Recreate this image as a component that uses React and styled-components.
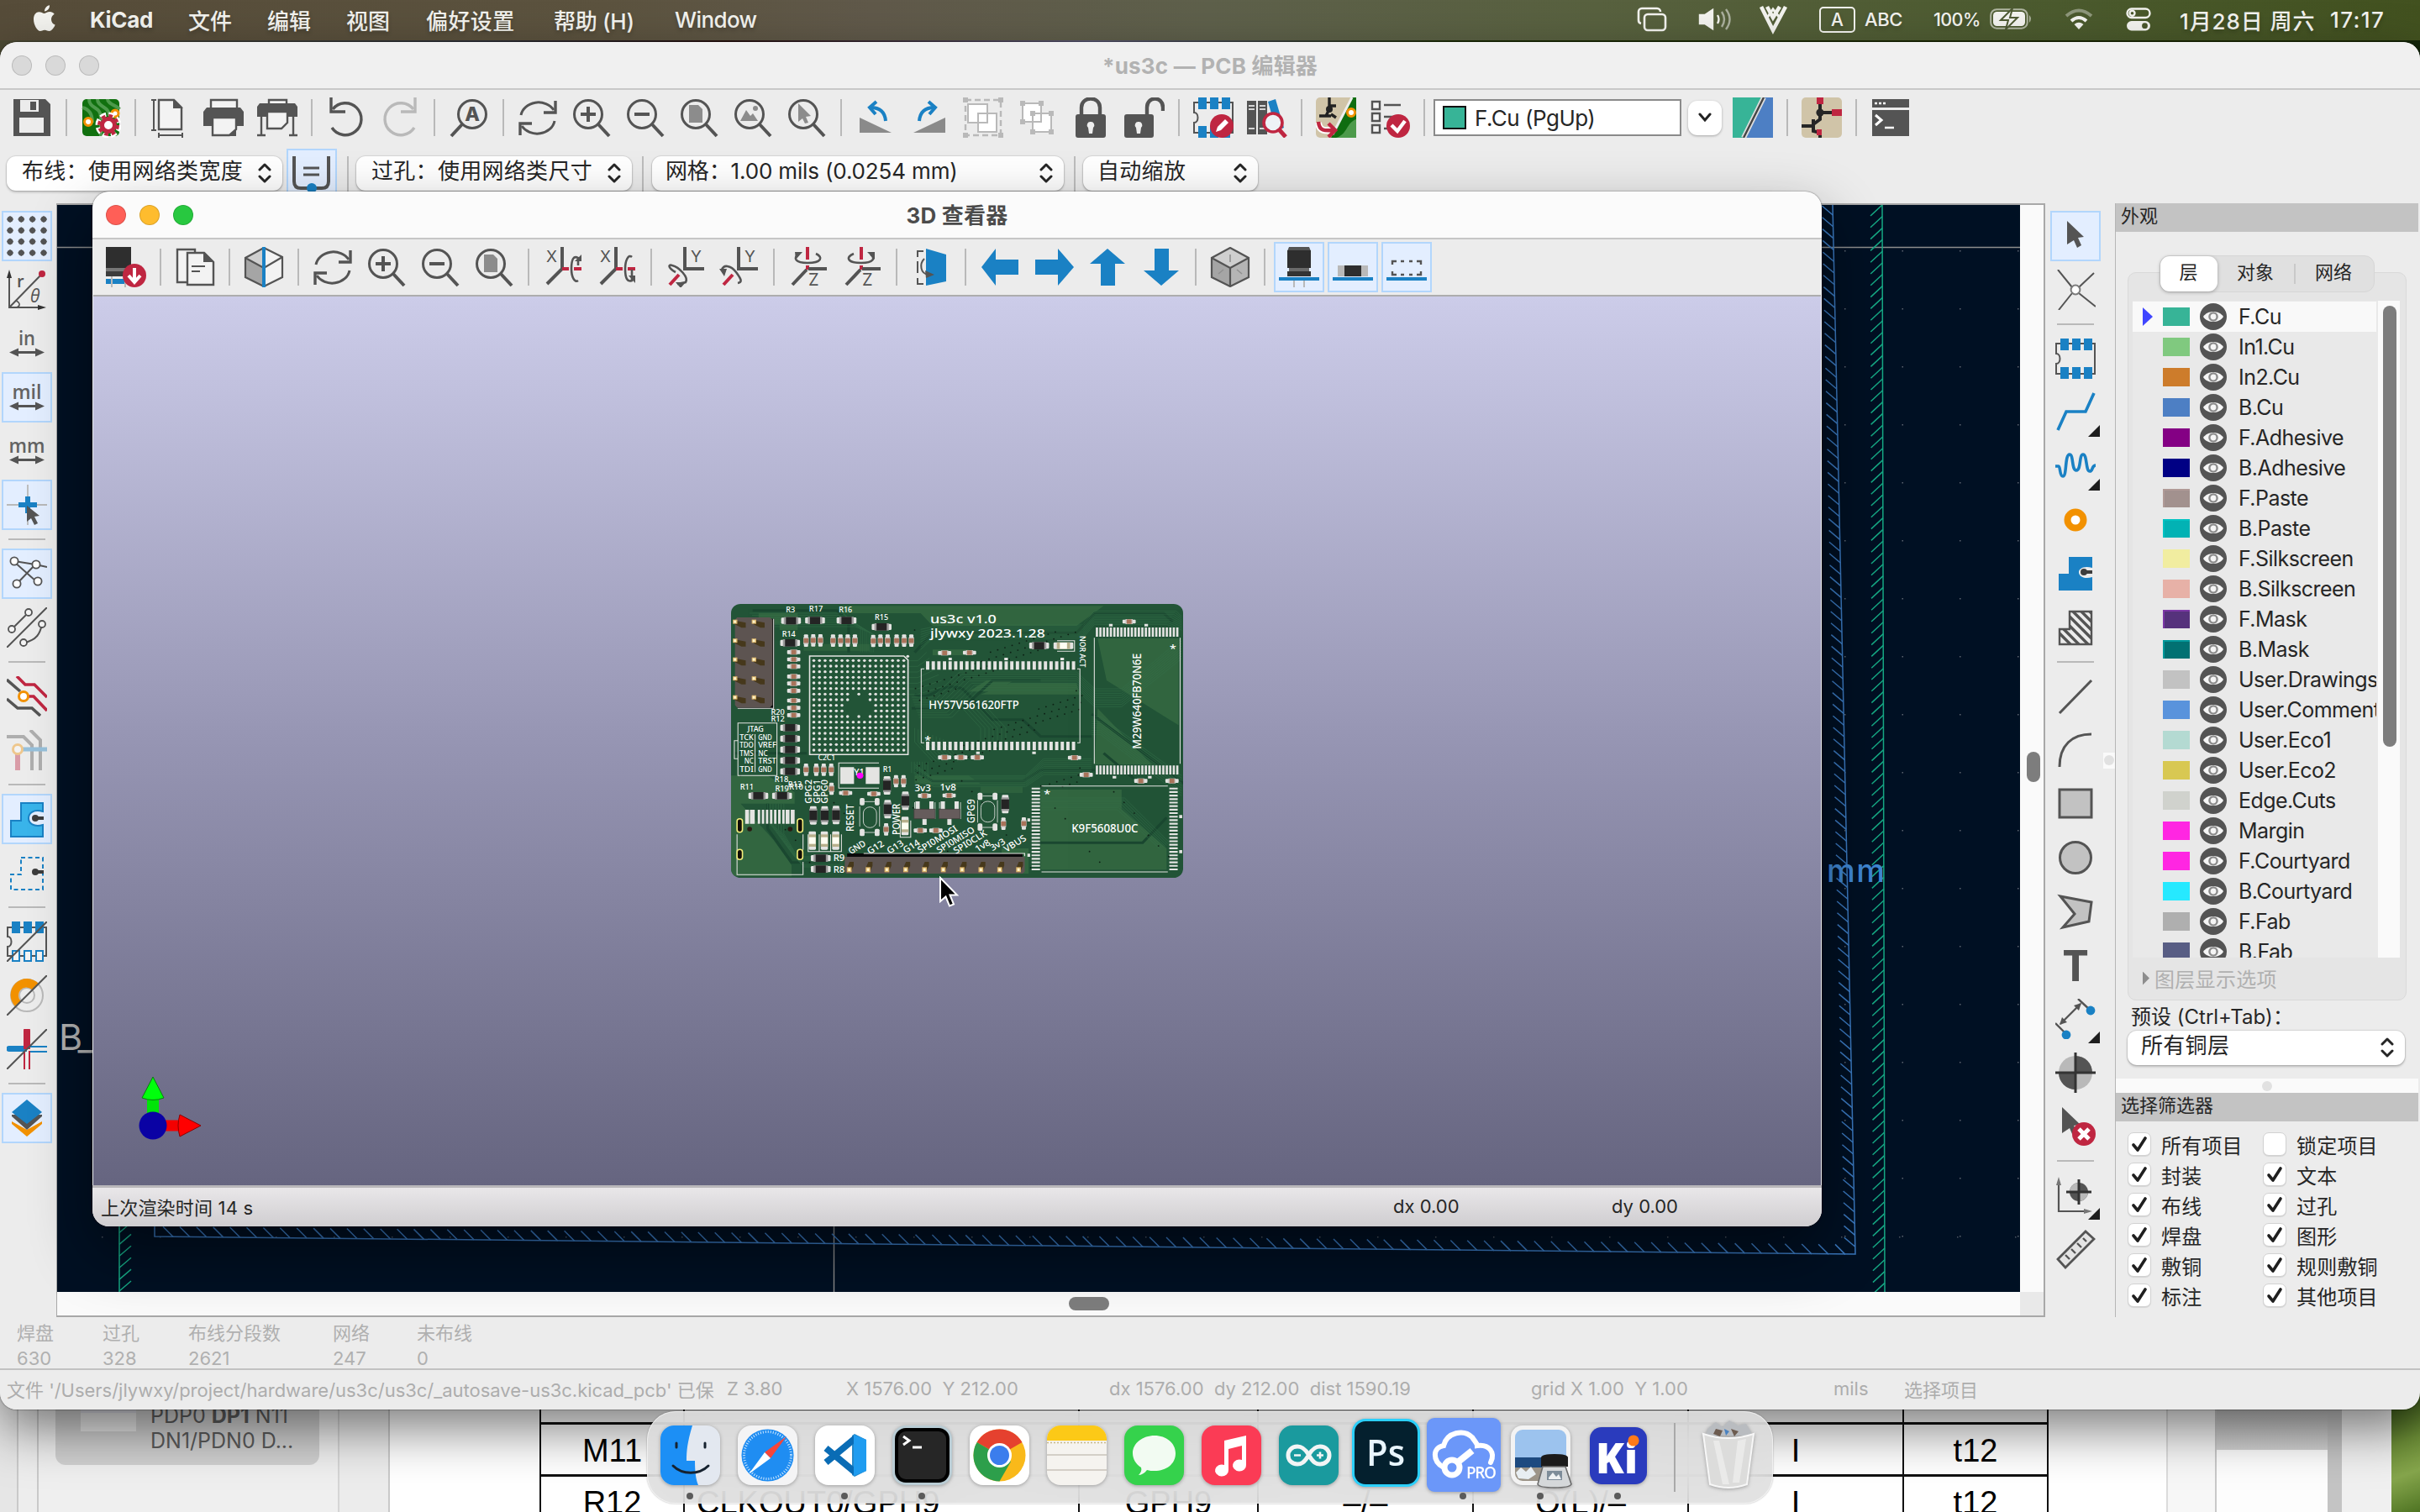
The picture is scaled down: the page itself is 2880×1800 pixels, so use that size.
import React from "react";
import styled, { createGlobalStyle, css } from "styled-components";

const UI = '"Inter", "Noto Sans CJK SC", sans-serif';
const D = "#545454";
const B = "#1a81c4";
const R = "#bf2641";
const G = "#b9b9b9";
const O = "#f29100";

const Global = createGlobalStyle`
  * { box-sizing: border-box; }
  html, body { margin: 0; padding: 0; width: 2880px; height: 1800px; overflow: hidden; }
  body { font-family: ${UI}; font-size: 26px; color: #262626; background: #3b4a1c; }
  svg { display: block; flex: none; }
`;

/* ---------- desktop ---------- */
const Desktop = styled.div`
  position: relative;
  width: 2880px;
  height: 1800px;
  overflow: hidden;
  background: linear-gradient(90deg, #4b4a33 0, #30333b 20%, #2a1210 30%, #5d5b78 45%, #1d2e06 60%, #1c2b05 98%, #12240a 100%);
`;
const Wallpaper = styled.div`
  position: absolute;
  right: 0;
  bottom: 0;
  width: 60px;
  height: 180px;
  background: linear-gradient(160deg, #1c3408 15%, #6d8f37 55%, #86a64c 75%, #4f7423 100%);
`;

/* ---------- menu bar ---------- */
const MenuBar = styled.header`
  display: flex;
  align-items: center;
  height: 48px;
  padding: 0 0 2px 40px;
  color: #f3f3ef;
  background: linear-gradient(90deg, #564c39 0, #5c533f 25%, #60594a 36%, #5e604b 50%, #58613f 66%, #4b5a2e 85%, #42511f 100%);
  text-shadow: 0 3px 5px rgba(0, 0, 0, 0.22);
`;
const MenuItem = styled.span`
  width: ${(p) => p.$w}px;
  font-weight: ${(p) => (p.$bold ? 700 : 500)};
  font-size: 26px;
  letter-spacing: ${(p) => p.$ls || -0.3}px;
  white-space: nowrap;
`;
const Spacer = styled.div`
  flex: 1;
`;
const StatusItem = styled.div`
  width: ${(p) => p.$w}px;
  font-size: ${(p) => p.$size || 22}px;
  font-weight: 500;
  letter-spacing: ${(p) => p.$ls || 0}px;
  white-space: nowrap;
  svg { overflow: visible; }
`;
const Ime = styled.div`
  width: 43px;
  height: 31px;
  border: 2px solid #f3f3ef;
  border-radius: 5px;
  font-size: 21px;
  line-height: 27px;
  text-align: center;
`;

/* ---------- windows ---------- */
const WindowFrame = styled.section`
  position: absolute;
  left: ${(p) => p.$x}px;
  top: ${(p) => p.$y}px;
  width: ${(p) => p.$w}px;
  height: ${(p) => p.$h}px;
  display: flex;
  flex-direction: column;
  overflow: hidden;
  border-radius: 20px;
  background: #ececec;
  box-shadow: ${(p) => p.$shadow};
`;
const TitleBar = styled.div`
  display: flex;
  align-items: center;
  justify-content: center;
  position: relative;
  height: 57px;
  flex: none;
  padding-bottom: 3px;
  border-radius: 20px 20px 0 0;
  background: ${(p) => (p.$active ? "#fbfbfb" : "#f0f0f0")};
  color: ${(p) => (p.$active ? "#4b4b4b" : "#b2b2b2")};
  border-bottom: 2px solid ${(p) => (p.$active ? "#c6c6c6" : "#c8c8c8")};
  font-size: 26px;
  font-weight: 700;
  letter-spacing: 0.2px;
`;
const Lights = styled.div`
  position: absolute;
  left: ${(p) => p.$x}px;
  top: 16px;
  display: flex;
  gap: 16px;
`;
const Light = styled.i`
  width: 24px;
  height: 24px;
  border-radius: 50%;
  background: ${(p) => p.$c};
  border: 1px solid rgba(0, 0, 0, 0.14);
`;
const Bar = styled.div`
  display: flex;
  align-items: center;
  height: 66px;
  flex: none;
  padding-left: ${(p) => p.$pad}px;
`;
const Cell = styled.div`
  width: 64px;
  height: 64px;
  flex: none;
  display: flex;
  align-items: center;
  justify-content: center;
  position: relative;
`;
const Btn = styled.div`
  width: 60px;
  height: 60px;
  display: flex;
  align-items: center;
  justify-content: center;
  border: 2px solid transparent;
  ${(p) => p.$on && css`background: #e3eeff; border-color: #b2d6fc;`}
  opacity: ${(p) => (p.$dim ? 0.4 : 1)};
`;
const Flyout = styled.i`
  position: absolute;
  right: 2px;
  bottom: 3px;
  width: 14px;
  height: 14px;
  background: #1d1d1d;
  clip-path: polygon(100% 0, 100% 100%, 0 100%);
`;
const Sep = styled.div`
  flex: none;
  background: #b9b9b9;
  ${(p) => (p.$h ? css`width: 44px; height: 2px; margin: 8px auto;` : css`width: 2px; height: 44px; margin: 0 8px;`)}
`;
const OptionsBar = styled.div`
  display: flex;
  align-items: flex-start;
  height: 69px;
  flex: none;
  padding: 13px 0 0 8px;
`;
const Combo = styled.div`
  display: flex;
  align-items: center;
  justify-content: space-between;
  width: ${(p) => p.$w}px;
  height: 41px;
  padding: 0 ${(p) => p.$pr || 13}px 2px ${(p) => p.$pl || 18}px;
  border-radius: 11px;
  background: #fff;
  box-shadow: 0 0 1px 1px rgba(0, 0, 0, 0.1), 0 2px 3px rgba(0, 0, 0, 0.2);
  font-size: 26px;
  letter-spacing: ${(p) => p.$ls || 0.3}px;
  line-height: 36px;
  white-space: nowrap;
`;
const ComboText = styled.span`
  padding-bottom: 3px;
`;
const Divider = styled.div`
  width: 2px;
  height: 46px;
  flex: none;
  background: #bdbdbd;
  margin: 0 ${(p) => p.$r}px 0 ${(p) => p.$l}px;
`;
const TrackBtn = styled.div`
  width: 60px;
  height: 60px;
  margin: -9px 0 0 5px;
  border: 2px solid #b2d6fc;
  background: #e3eeff;
  display: flex;
  justify-content: center;
  padding-top: 5px;
`;
const LayerBox = styled.div`
  display: flex;
  align-items: center;
  width: 295px;
  height: 44px;
  margin-left: 2px;
  padding-left: 9px;
  gap: 10px;
  border: 2px solid #8a8a8a;
  background: #fff;
  font-size: 26px;
  letter-spacing: -0.5px;
`;
const LayerChip = styled.i`
  width: 28px;
  height: 28px;
  background: #37b497;
  border: 2px solid #111;
`;
const DropBtn = styled.div`
  width: 40px;
  height: 41px;
  margin: 0 5px 0 8px;
  border-radius: 11px;
  background: #fff;
  box-shadow: 0 1px 3px rgba(0, 0, 0, 0.3);
  display: flex;
  align-items: center;
  justify-content: center;
`;

const Body = styled.div`
  display: grid;
  grid-template-columns: 67px 2367px 83px 1fr;
  height: 1326px;
  flex: none;
`;
const SideBar = styled.div`
  padding: 7px 0 0 ${(p) => p.$pad}px;
  width: ${(p) => p.$pad + 63}px;
  align-self: flex-start;
`;
const SideCell = styled(Cell)`
  width: 63px;
`;
const RightBar = styled.div`
  display: flex;
  align-items: center;
  justify-content: space-between;
`;
const Work = styled.div`
  display: grid;
  grid-template-columns: 1fr 28px;
  grid-template-rows: 1294px 1fr;
  border: 1px solid #a8a8a8;
  border-width: 2px 2px 2px 1px;
`;
const ScrollTrack = styled.div`
  background: #fafafa;
  display: flex;
  justify-content: center;
  align-items: flex-start;
`;
const HTrack = styled(ScrollTrack)`
  justify-content: flex-start;
  align-items: center;
`;
const Corner = styled.div`
  background: #e9e9e9;
`;
const Thumb = styled.i`
  width: ${(p) => p.$w}px;
  height: ${(p) => p.$h}px;
  margin: ${(p) => p.$m};
  border-radius: 9px;
  background: #7d7d7d;
`;
const PanelGrip = styled.div`
  width: 14px;
  height: 19px;
  background: #fafafa;
  display: flex;
  align-items: center;
  justify-content: center;
`;
const Dot = styled.i`
  width: 12px;
  height: 12px;
  border-radius: 50%;
  background: #e1e1e1;
`;

/* ---------- appearance panel ---------- */
const Panel = styled.aside`
  display: flex;
  flex-direction: column;
  margin-right: 2px;
  border-left: 1px solid #b5b5b5;
`;
const PanelTitle = styled.div`
  height: 34px;
  flex: none;
  padding-left: 6px;
  background: #c3c3c3;
  font-size: 22px;
  line-height: 31px;
`;
const TabsRow = styled.div`
  display: flex;
  justify-content: center;
  height: 44px;
  margin: 28px 0 0 -1px;
  position: relative;
`;
const Tabs = styled.div`
  display: flex;
  align-items: center;
  width: 256px;
  border-radius: 12px;
  background: #e0e0e0;
  border: 1px solid #d6d6d6;
  font-size: 22px;
`;
const Tab = styled.div`
  width: ${(p) => p.$w}px;
  height: 42px;
  line-height: 38px;
  text-align: center;
  border-radius: 11px;
  ${(p) => p.$on && css`background: #fff; box-shadow: 0 1px 4px rgba(0, 0, 0, 0.3);`}
`;
const TabLine = styled.i`
  width: 2px;
  height: 24px;
  background: #c9c9c9;
`;
const GroupBox = styled.div`
  margin: -24px 0 0 14px;
  width: 332px;
  height: 867px;
  padding: 33px 7px 0 5px;
  border: 1px solid #d9d9d9;
  border-radius: 10px;
  background: #e5e5e5;
`;
const ListView = styled.div`
  display: flex;
  height: 782px;
  overflow: hidden;
  background: #e9e9e9;
`;
const Rows = styled.div`
  width: 290px;
  overflow: hidden;
  margin-right: 2px;
`;
const LayerRow = styled.div`
  display: flex;
  align-items: center;
  height: 36px;
  padding-left: 12px;
  background: ${(p) => (p.$on ? "#f9f9f9" : "transparent")};
  font-size: 25px;
  letter-spacing: -0.55px;
  white-space: nowrap;
  &:first-child { margin-top: 1px; }
`;
const Mark = styled.i`
  width: 12px;
  height: 22px;
  margin-right: 12px;
  flex: none;
  background: ${(p) => (p.$on ? "#4046ff" : "transparent")};
  clip-path: polygon(0 0, 100% 50%, 0 100%);
`;
const Chip = styled.i`
  width: 32px;
  height: 22px;
  flex: none;
  margin: -1px 12px 0 0;
  background: ${(p) => p.$c};
  ${(p) => p.$edge && css`box-shadow: inset 2px 2px 0 ${p.$edge};`}
`;
const LayerName = styled.span`
  margin-left: 14px;
`;
const ListScroll = styled.div`
  width: 26px;
  background: #fafafa;
  padding: 6px 0 0 6px;
`;
const ListThumb = styled.div`
  width: 16px;
  height: 525px;
  border-radius: 8px;
  background: #7d7d7d;
`;
const Collapse = styled.div`
  display: flex;
  align-items: center;
  height: 49px;
  padding-left: 12px;
  gap: 6px;
  font-size: 24px;
  letter-spacing: 0.3px;
  color: #b0b0b0;
`;
const Tri = styled.i`
  width: 8px;
  height: 16px;
  background: #8d8d8d;
  clip-path: polygon(0 0, 100% 50%, 0 100%);
`;
const PresetLabel = styled.div`
  margin: 3px 0 0 18px;
  height: 32px;
  line-height: 33px;
  font-size: 24px;
`;
const PresetWrap = styled.div`
  padding: 1px 0 0 14px;
  height: 58px;
`;
const Splitter = styled.div`
  height: 17px;
  background: #fafafa;
  display: flex;
  align-items: center;
  justify-content: center;
`;
const Filters = styled.div`
  display: grid;
  grid-template-columns: 161px 1fr;
  grid-auto-rows: 36px;
  padding: 9px 0 0 14px;
`;
const Filter = styled.label`
  display: flex;
  align-items: center;
  gap: 12px;
  font-size: 24px;
  letter-spacing: 0.2px;
  white-space: nowrap;
`;
const Check = styled.i`
  width: 28px;
  height: 28px;
  border-radius: 7px;
  background: #fff;
  border: 1px solid #d2d2d2;
  box-shadow: 0 1px 1px rgba(0, 0, 0, 0.1);
  display: flex;
  align-items: center;
  justify-content: center;
`;

/* ---------- bottom of the editor ---------- */
const InfoBar = styled.div`
  display: flex;
  height: 63px;
  flex: none;
  padding: 4px 0 0 20px;
  border-bottom: 2px solid #c2c2c2;
  color: #b0b0b0;
  font-size: 22px;
`;
const InfoItem = styled.div`
  width: ${(p) => p.$w}px;
  line-height: 30px;
  white-space: nowrap;
`;
const StatusBar = styled.div`
  display: flex;
  align-items: center;
  flex: 1;
  padding: 0 0 3px 8px;
  color: #adadad;
  font-size: 22px;
  border-radius: 0 0 20px 20px;
`;
const StatusCell = styled.span`
  width: ${(p) => p.$w}px;
  letter-spacing: ${(p) => p.$ls || 0}px;
  white-space: pre;
`;

/* ---------- 3D viewer ---------- */
const View3D = styled.div`
  position: relative;
  height: 1060px;
  flex: none;
  margin: 0 1px;
  border-top: 2px solid #adadad;
  background: linear-gradient(180deg, #cccce9 0, #9695b3 50%, #666580 100%);
`;
const ViewStatus = styled.div`
  display: flex;
  align-items: center;
  flex: 1;
  padding: 0 0 3px 10px;
  border-top: 3px solid #b9b7ba;
  background: linear-gradient(180deg, #e9e7e9, #cfcdd0);
  font-size: 22px;
`;
const Board = styled.svg`
  position: absolute;
  left: 759px;
  top: 366px;
`;
const Axes = styled.svg`
  position: absolute;
  left: 49px;
  top: 922px;
`;
const Pointer = styled.svg`
  position: absolute;
  left: 1004px;
  top: 690px;
`;

/* ---------- document window behind ---------- */
const DocWindow = styled.section`
  position: absolute;
  left: 0;
  top: 1634px;
  width: 2846px;
  height: 166px;
  overflow: hidden;
  display: flex;
  background: #f0f0f0;
`;
const Strip = styled.div`
  width: ${(p) => p.$w}px;
  flex: none;
  background: ${(p) => p.$c};
  border-right: ${(p) => (p.$line ? "2px solid #c9c9c9" : "0")};
`;
const Thumbs = styled.div`
  width: 358px;
  flex: none;
  padding: 0 22px 0 20px;
  background: #efefef;
  border-right: 2px solid #d5d5d5;
`;
const ThumbCard = styled.div`
  display: flex;
  gap: 17px;
  height: 110px;
  padding: 26px 0 0 30px;
  border-radius: 0 0 12px 12px;
  background: #d0d0d0;
  color: #5c5c5c;
  font-size: 25px;
  line-height: 30px;
  letter-spacing: 0;
`;
const ThumbPic = styled.div`
  width: 66px;
  height: 44px;
  background: #e8e8e8;
  border-top: 22px solid #d9d9e0;
`;
const ThumbText = styled.div`
  padding-top: 10px;
  white-space: nowrap;
`;
const Page = styled.div`
  width: 2116px;
  flex: none;
  padding-left: 178px;
  background: #fff;
  border-right: 2px solid #dcdcdc;
`;
const Table = styled.div`
  display: grid;
  grid-template-columns: 171px 470px 213px 256px 256px 256px 172px;
  grid-auto-rows: 62px;
  width: 1796px;
  border-left: 2px solid #111;
`;
const Td = styled.div`
  display: flex;
  align-items: center;
  justify-content: ${(p) => (p.$left ? "flex-start" : "center")};
  padding: 4px 0 0 ${(p) => (p.$left ? 14 : 0)}px;
  border-right: 2px solid #111;
  border-bottom: 3px solid #111;
  color: #000;
  font: 38px "Liberation Sans", Arial, sans-serif;
`;
const GreyBlock = styled.div`
  width: 132px;
  flex: none;
  background: linear-gradient(180deg, #b5b5b5 0, #d3d3d3 92px, #fdfdfd 92px);
`;

/* ---------- dock ---------- */
const Dock = styled.nav`
  position: absolute;
  left: 770px;
  top: 1680px;
  width: 1340px;
  height: 110px;
  border-radius: 34px;
  background: rgba(222, 222, 222, 0.86);
  backdrop-filter: blur(30px);
  box-shadow: inset 0 0 0 1px rgba(255, 255, 255, 0.5), 0 0 2px rgba(0, 0, 0, 0.35);
  display: flex;
  padding: 7px 0 0 5px;
`;
const DockApp = styled.div`
  width: 92px;
  height: 100px;
  display: flex;
  flex-direction: column;
  align-items: center;
  position: relative;
  svg { overflow: visible; margin-top: ${(p) => p.$top || 10}px; filter: drop-shadow(0 1px 2px rgba(0, 0, 0, 0.3)); }
`;
const Running = styled.i`
  position: absolute;
  bottom: 2px;
  width: 8px;
  height: 8px;
  border-radius: 50%;
  background: #5b5b5b;
`;
const DockLine = styled.div`
  width: 2px;
  height: 82px;
  margin: 7px 17px 0 21px;
  background: #a9a9a9;
`;

/* ---------- icons, drawn on a 48 unit grid ---------- */
const S = (p) => <path fill="none" stroke={D} strokeWidth="3" {...p} />;
const lens = (
  <>
    <circle cx="20" cy="20" r="16.5" fill="none" stroke={D} strokeWidth="3" />
    <S d="M32 32L45 46" strokeWidth="4" />
  </>
);
const refresh = (
  <>
    <S d="M4 21A21 18 0 0 1 43 15" />
    <S d="M45 4V18H31" strokeWidth="3.4" />
    <S d="M44 28A21 18 0 0 1 5 34" />
    <S d="M3 45V31H17" strokeWidth="3.4" />
  </>
);
const chipPads = (
  <>
    <S d="M1 6H47V42H1V30C7 30 7 18 1 18Z" strokeWidth="2" />
    <path fill={B} d="M6 0h10v14H6zM20 0h10v14H20zM34 0h10v14H34zM6 34h10v14H6zM20 34h10v14H20zM34 34h10v14H34z" />
  </>
);
const rotX = (flip) => (
  <>
    <text x="4" y="18" fontSize="19" fontFamily="Inter, sans-serif" fill={D}>X</text>
    <S d="M23 0V26L5 44" strokeWidth="4" />
    <path stroke={R} strokeWidth="4" d="M23 26H31M37 26H46" />
    {flip ? (
      <><S d="M42 12C38 8 34 16 34 26C34 38 37 42 42 40V27" strokeWidth="2.6" /><path fill={D} d="M38 34h8v9z" /></>
    ) : (
      <><S d="M42 40C38 43 34 36 34 26C34 14 37 10 42 13V22" strokeWidth="2.6" /><path fill={D} d="M38 17h8v-8z" /></>
    )}
  </>
);
const rotY = (flip) => (
  <>
    <text x="30" y="18" fontSize="19" fontFamily="Inter, sans-serif" fill={D}>Y</text>
    <S d="M23 0V26H46" strokeWidth="4" />
    <path stroke={R} strokeWidth="4" d="M16 33L5 45" />
    {flip ? (
      <><S d="M3 28C4 20 14 22 20 30C26 38 28 42 22 43" strokeWidth="2.6" /><path fill={D} d="M0 26h9l-3 9z" /></>
    ) : (
      <><S d="M12 30C4 26 2 20 8 22C16 24 28 36 24 42L14 44" strokeWidth="2.6" /><path fill={D} d="M12 42h12l-6 7z" /></>
    )}
  </>
);
const rotZ = (flip) => (
  <>
    <path stroke={R} strokeWidth="4" d="M23 0V15M23 22V27" />
    <S d="M24 26H46M22 27L5 45" strokeWidth="4" />
    {flip ? (
      <><S d="M14 8C4 12 6 19 23 19C38 19 40 13 34 9" strokeWidth="2.6" /><path fill={D} d="M30 6h9v9z" /></>
    ) : (
      <><S d="M33 8C42 12 40 19 23 19C8 19 6 13 12 9" strokeWidth="2.6" /><path fill={D} d="M8 6h9l-8 9z" /></>
    )}
    <text x="24" y="46" fontSize="20" fontFamily="Inter, sans-serif" fill={D}>Z</text>
  </>
);
const unit = (t) => (
  <>
    <text x="24" y="26" textAnchor="middle" fontSize="24" fontWeight="600" fontFamily='"Open Sans", sans-serif' fill="#636363" textLength={t === "mm" ? 43 : t === "mil" ? 35 : 20} lengthAdjust="spacingAndGlyphs">{t}</text>
    <path fill={D} d="M3 34.500L14 29.500V33H34V29.500L45 34.500L34 39.500V36H14V39.500Z" />
  </>
);
const icons = {
  save: <path fill={D} fillRule="evenodd" d="M2 2H40L46 8V46H2ZM10 3V17H32V3ZM22 5h7v10h-7zM9 24V42H38V24Z" />,
  setup: (
    <>
      <rect x="2" y="2" width="44" height="44" rx="5" fill="#11700f" />
      <path d="M10 2C10 14 24 10 24 24V46M20 2C20 12 34 10 34 22M32 2C32 8 44 10 46 14M2 12C10 14 14 20 14 30" fill="none" stroke="#4d9a4b" strokeWidth="4" />
      <circle cx="9" cy="29" r="4.5" fill="#fff" stroke={O} strokeWidth="3" />
      <circle cx="41" cy="19" r="4" fill="#fff" stroke={O} strokeWidth="3" />
      <circle cx="33" cy="33" r="13" fill="none" stroke="#fff" strokeWidth="5" strokeDasharray="7 3.2" />
      <circle cx="33" cy="33" r="7.5" fill="#fff" stroke={R} strokeWidth="5" />
      <circle cx="33" cy="33" r="11" fill="none" stroke={R} strokeWidth="4" strokeDasharray="4.600 4.040" />
    </>
  ),
  page: (
    <>
      <S d="M11 3H29L38 12V38H11Z" strokeWidth="2.4" fill="#f3f3f3" />
      <path fill={D} d="M28 2L40 13H28z" />
      <S d="M5 2V39M2 3H8M2 39H8M11 45H39M11 42V48M39 42V48" strokeWidth="2" />
    </>
  ),
  print: (
    <>
      <S d="M9 13V3H40V13" strokeWidth="2.4" fill="#f3f3f3" />
      <path fill={D} d="M4 12H44L48 17V34H0V17Z" />
      <path d="M11 24H39V38L31 45H11Z" fill="#f3f3f3" stroke={D} strokeWidth="2.4" />
      <path fill={D} d="M39 37V46H30z" />
    </>
  ),
  plot: (
    <>
      <S d="M14 8V3H35V8" strokeWidth="2.4" fill="#f3f3f3" />
      <path fill={D} d="M3 7H45L48 11V23H0V11Z" />
      <path d="M12 17H36V30L29 37H12Z" fill="#f3f3f3" stroke={D} strokeWidth="2.4" />
      <S d="M5 23V45M43 23V45M0 45H10M38 45H48" strokeWidth="2.4" />
    </>
  ),
  undo: <><S d="M8 14A19 19 0 1 1 7 36" strokeWidth="3.4" /><S d="M6 0V17H23" strokeWidth="3.4" /></>,
  redo: <><S d="M40 14A19 19 0 1 0 41 36" stroke={G} strokeWidth="3.4" /><S d="M42 0V17H25" stroke={G} strokeWidth="3.4" /></>,
  find: (
    <>
      <circle cx="28" cy="20" r="16.5" fill="none" stroke={D} strokeWidth="3" />
      <S d="M16 32L3 46" strokeWidth="4" />
      <text x="28" y="28" textAnchor="middle" fontSize="23" fontWeight="800" fontFamily="Inter, sans-serif" fill={D}>A</text>
    </>
  ),
  refresh,
  zoomIn: <>{lens}<S d="M11 20H29M20 11V29" strokeWidth="4" /></>,
  zoomOut: <>{lens}<S d="M11 20H29" strokeWidth="4" /></>,
  zoomFit: <>{lens}<path fill="#8c8c8c" d="M12 9H23L28 14V30H12z" /></>,
  zoomObj: <>{lens}<path fill="#8c8c8c" d="M9 28L16 15L21 22L24 19L30 28z" /><circle cx="27" cy="13" r="3" fill="#8c8c8c" /></>,
  zoomSel: <>{lens}<path fill="#8c8c8c" d="M14 7L29 22L23 23L26 30L22 31L19 25L14 29z" /></>,
  ccw: <><path fill="#8a8a8a" d="M5 24V42H43z" /><path fill="none" stroke={B} strokeWidth="4" d="M36 28C35 16 28 12 18 12" /><path fill="none" stroke={B} strokeWidth="4" d="M25 5L17 12L24 20" /></>,
  cw: <><path fill="#8a8a8a" d="M43 24V42H5z" /><path fill="none" stroke={B} strokeWidth="4" d="M12 28C13 16 20 12 30 12" /><path fill="none" stroke={B} strokeWidth="4" d="M23 5L31 12L24 20" /></>,
  group: (
    <>
      <path fill="none" stroke={G} strokeWidth="2.4" strokeDasharray="7 4" d="M3 3H45V45H3z" />
      <path fill="#fff" stroke={G} strokeWidth="2" d="M6 8H29V30H6zM18 19H40V41H18z" />
      <path fill={G} d="M0 0h6v6H0zM42 0h6v6H42zM0 42h6v6H0zM42 42h6v6H42z" />
    </>
  ),
  ungroup: (
    <>
      <path fill="#fff" stroke={G} strokeWidth="2" d="M7 7H29V29H7zM19 19H41V41H19z" />
      <path fill={G} d="M4 4h6v6H4zM26 4h6v6H26zM4 26h6v6H4zM16 16h6v6H16zM38 16h6v6H38zM16 38h6v6H16zM38 38h6v6H38z" />
    </>
  ),
  lock: <><rect x="6" y="20" width="36" height="28" rx="3" fill={D} /><S d="M13 21V12C13 -2 35 -2 35 12V21" strokeWidth="4.4" /><path fill="#eee" d="M24 29a4 4 0 0 1 3 7l-1 7h-4l-1-7a4 4 0 0 1 3-7z" /></>,
  unlock: <><rect x="0" y="20" width="35" height="28" rx="3" fill={D} /><S d="M27 21V12C27 -2 46 -2 46 12V16" strokeWidth="4.4" /><path fill="#eee" d="M17 29a4 4 0 0 1 3 7l-1 7h-4l-1-7a4 4 0 0 1 3-7z" /></>,
  fpEdit: <>{chipPads}<circle cx="34" cy="34" r="14" fill={R} /><path d="M27 41L29 35L38 26L42 30L33 39Z" fill="#fff" /></>,
  fpLib: (
    <>
      <path fill={D} d="M0 4h11v40H0zM13 4h11v40H13z" />
      <path stroke="#fff" strokeWidth="1.6" d="M2 10h7M2 14h7M2 37h7M15 10h7M15 14h7M15 37h7" />
      <path fill={B} d="M25 5L34 2L44 36L35 40z" />
      <circle cx="31" cy="30" r="11" fill="#eef2f6" stroke={R} strokeWidth="3.6" />
      <path stroke={R} strokeWidth="5" d="M38 38L46 47" />
    </>
  ),
  update: (
    <>
      <rect width="48" height="48" rx="5" fill="#d0c4a8" />
      <path fill="#0f6d10" d="M42 0H48V48H18z" />
      <path fill="#4d9a4b" d="M48 26V48H24C38 44 36 30 48 26z" />
      <path stroke="#eee" strokeWidth="3" d="M43 0L20 44" />
      <path stroke="#222" strokeWidth="3.4" fill="none" d="M16 0V14L12 22M16 10h8M4 22H18M18 20l6 4" />
      <circle cx="16" cy="14" r="4" fill="#222" /><circle cx="42" cy="18" r="4.5" fill="#fff" stroke={O} strokeWidth="3" />
      <path fill="none" stroke="#fff" strokeWidth="8" d="M3 30C4 40 10 40 22 39" />
      <path fill="none" stroke={R} strokeWidth="4.5" d="M3 29C4 40 10 40 22 39M15 31L23 39L15 47" />
    </>
  ),
  drc: (
    <>
      <path fill="#f4f4f4" stroke={D} strokeWidth="2.4" d="M3 5h9v9H3zM3 19h9v9H3zM3 33h9v9H3z" />
      <S d="M17 9H37M17 23H30M17 37H24" strokeWidth="2.6" />
      <circle cx="34" cy="34" r="14" fill={R} />
      <path fill="none" stroke="#fff" strokeWidth="4.4" d="M26 33L33 40L42 28" />
    </>
  ),
  pair: <><path fill="#37b497" d="M0 0H48V48H0z" /><path fill="#4d7fc4" d="M38 0H48V48H14z" /><path stroke="#ddd" strokeWidth="6" d="M37 0L13 48" /><path stroke="#444" strokeWidth="2.4" d="M37 0L13 48" /></>,
  net: (
    <>
      <rect width="48" height="48" rx="5" fill="#d0c4a8" />
      <path stroke="#262626" strokeWidth="4" fill="none" d="M22 0V18M22 18H38M22 18L22 26L14 32M0 34H14M14 26V40L22 42V48" />
      <circle cx="22" cy="18" r="4.6" fill="#262626" />
      <path fill={R} d="M18 0h8v8h-8zM36 14h12v8H36zM18 38h6v7h-6z" />
    </>
  ),
  console: <><path fill={D} d="M2 2H46V12H2zM2 15H46V46H2z" /><path fill="none" stroke="#fff" strokeWidth="3" d="M6 21L13 27L6 33" /><path stroke="#fff" strokeWidth="2.4" d="M17 36H28M5 7h3M10 7h3M15 7h3" /></>,
  raytrace: (
    <>
      <path fill="#2e2e2e" d="M0 0H30V25H0z" /><path fill="#777" d="M0 25H30V29H0z" /><path fill="#3c3c3c" d="M0 29H30V35H0z" />
      <path fill={B} d="M0 38H24V44H0z" /><path stroke={G} strokeWidth="2" d="M7 35V48M23 35V48" />
      <circle cx="34" cy="34" r="14" fill={R} /><path fill="none" stroke="#fff" strokeWidth="4" d="M34 25V41M27 34L34 42L41 34" />
    </>
  ),
  copy: <><path fill="#f3f3f3" stroke={D} strokeWidth="2.4" d="M3 3H24V42H3z" /><path fill="#f3f3f3" stroke={D} strokeWidth="2.4" d="M15 7H35L46 18V45H15z" /><path fill={D} d="M34 6L47 18H34z" /><S d="M20 23H36M20 29H30" strokeWidth="2" /></>,
  box3d: (
    <>
      <path fill="#cfcfcf" d="M24 1L46 12L24 25L2 13z" /><path fill="#f3f3f3" d="M24 1L46 12V36L24 47z" /><path fill="#a5a5a5" d="M2 13L24 25V47L2 36z" />
      <S d="M24 1L46 12V36L24 47L2 36V13ZM2 13L24 25L46 12" strokeWidth="2.2" /><path stroke={B} strokeWidth="4" d="M24 0V48" />
    </>
  ),
  rx1: rotX(false), rx2: rotX(true), ry1: rotY(false), ry2: rotY(true), rz1: rotZ(false), rz2: rotZ(true),
  flip: <><path fill={B} d="M18 2L42 9V41L18 46z" /><S d="M8 12V5H15M8 37V44H15M8 17V31" strokeWidth="2" /><S d="M16 14C10 20 11 32 21 33" strokeWidth="2" /><path fill={D} d="M17 28L28 33L18 37z" /></>,
  left: <path fill={B} d="M2 24L19 2V15H46V33H19V46z" />,
  right: <path fill={B} d="M48 24L29 2V15H2V33H29V46z" />,
  up: <path fill={B} d="M24 2L45 20H33V46H16V20H3z" />,
  down: <path fill={B} d="M24 46L45 28H33V2H16V28H3z" />,
  cube: (
    <>
      <path fill="#cfcfcf" d="M24 1L46 13L24 25L2 13z" /><path fill="#b5b5b5" d="M46 13V36L24 47V25z" /><path fill="#a5a5a5" d="M2 13L24 25V47L2 36z" />
      <S d="M24 1L46 13V36L24 47L2 36V13ZM2 13L24 25L46 13M24 25V47" strokeWidth="2.2" />
      <path stroke="#909090" strokeWidth="1.6" d="M24 9V18M10 32L16 27M38 32L32 27" />
    </>
  ),
  tht: <><path fill={D} d="M12 0H36L38 5H10z" /><path fill="#2e2e2e" d="M10 4H38V25H10z" /><path fill="#6a6a6a" d="M12 25H36V30H12z" /><path fill="#333" d="M10 29H38V35H10z" /><path fill={B} d="M0 36H48V40H0z" /><path stroke={G} strokeWidth="2" d="M18 40V48M30 40V48" /></>,
  smd: <><path fill={G} d="M6 22H42V35H6z" /><path fill="#2e2e2e" d="M14 22H34V35H14z" /><path fill={B} d="M0 36H48V40H0z" /></>,
  virt: <><path fill="none" stroke={D} strokeWidth="2.4" d="M7 21V17H12M17 17H21M27 17H31M36 17H41V21M41 29V33H36M31 33H27M21 33H17M12 33H7V29" /><path fill={B} d="M0 36H48V40H0z" /></>,
  grid: <>{[4, 17.3, 30.6, 44].map((y, i) => [4, 17.3, 30.6, 44].map((x, j) => <path key={i + "-" + j} fill={D} d={`M${x - 4} ${y}L${x - 2.6} ${y - 2.6}L${x} ${y - 4}L${x + 2.6} ${y - 2.6}L${x + 4} ${y}L${x + 2.6} ${y + 2.6}L${x} ${y + 4}L${x - 2.6} ${y + 2.6}Z`} />))}</>,
  polar: (
    <>
      <S d="M3 8V45H40M4 44L41 6" strokeWidth="2" /><path fill="#333" d="M3 0L6 10H0zM47 45L37 42V48z" /><circle cx="42" cy="5" r="4" fill={R} />
      <S d="M12 45C18 42 14 38 11 37" strokeWidth="1.6" />
      <text x="12" y="21" fontSize="20" fontWeight="600" fontFamily="Open Sans, sans-serif" fill={D}>r</text><text x="28" y="39" fontSize="21" fontStyle="italic" fontFamily="Open Sans, sans-serif" fill={D}>θ</text>
    </>
  ),
  inch: unit("in"), mil: unit("mil"), mm: unit("mm"),
  cursor: <><path stroke={G} strokeWidth="1.8" d="M0 24H48M25 0V48" /><path stroke={B} strokeWidth="6" d="M14 24H36M25 14V34" /><path fill={D} d="M24 25L39 37L33 38L37 46L33 48L29 40L24 44z" /></>,
  rats: <><S d="M9 10L35 33M12 36L34 13M9 9L34 13L48 16" strokeWidth="2" />{[[9, 9], [35, 13], [12, 36], [37, 33]].map(([x, y]) => <circle key={x} cx={x} cy={y} r="4.6" fill="#fff" stroke={D} strokeWidth="1.8" />)}</>,
  curved: <><S d="M0 48L48 0M6 26L26 6M20 42C36 40 40 30 42 20" strokeWidth="2" />{[[6, 26], [26, 6], [20, 42], [42, 20]].map(([x, y]) => <circle key={x} cx={x} cy={y} r="4" fill="#f4f4f4" stroke={D} strokeWidth="1.8" />)}</>,
  nets1: <><S d="M0 4L16 18M0 27L13 38H30L40 47" strokeWidth="3.6" /><path fill="none" stroke={R} strokeWidth="3.6" d="M12 0L22 10H33L48 25M24 24H32L48 41" /><circle cx="20" cy="24" r="5.5" fill="#fff" stroke={O} strokeWidth="3" /></>,
  nets2: <><S d="M0 8H20L30 18V48M28 0L40 12V48" strokeWidth="4" /><path stroke={B} strokeWidth="5" d="M18 23H48" /><path stroke={R} strokeWidth="6" d="M13 28V48" /><circle cx="13" cy="23" r="5.5" fill="#fff" stroke={O} strokeWidth="3" /></>,
  zone: <><path fill="#39b4ea" stroke={B} strokeWidth="2" d="M17 5H43V15C32 12 26 17 26 23C26 29 32 34 43 31V45H5V26H17z" /><path stroke="#3d3d3d" strokeWidth="4" d="M34 23H44" /><circle cx="34" cy="23" r="4" fill="#3d3d3d" /></>,
  zoneOff: <><path fill="none" stroke={B} strokeWidth="2" strokeDasharray="5 3.5" d="M17 6H43V44H5V26H17z" /><path stroke="#3d3d3d" strokeWidth="4" d="M34 23H44" /><circle cx="34" cy="23" r="4" fill="#3d3d3d" /></>,
  padOff: (
    <>
      <S d="M1 7H47V41H1V30C7 30 7 18 1 18Z" strokeWidth="2" />
      <path fill={B} d="M6 0h10v14H6zM20 0h10v14H20zM34 0h10v14H34z" /><path fill="#f4f4f4" stroke={B} strokeWidth="2" d="M7 35h8v12H7zM21 35h8v12H21zM35 35h8v12H35z" />
      <S d="M0 48L48 0" strokeWidth="2" />
    </>
  ),
  viaOff: <><circle cx="24" cy="24" r="19" fill="none" stroke={G} strokeWidth="2" /><circle cx="24" cy="24" r="9" fill="none" stroke={G} strokeWidth="2" /><path fill={O} d="M10 37A19 19 0 1 1 38 10L30 17A9 9 0 1 0 17 31z" /><S d="M0 48L48 0" strokeWidth="2" /></>,
  trackOff: <><path fill={B} d="M3 20H24V27H3A3 3 0 0 1 3 20z" /><path fill={R} d="M20 24V2A3 3 0 0 1 28 2V24z" /><path stroke={B} strokeWidth="2" d="M26 21H48M26 27H48" /><path stroke={R} strokeWidth="2" d="M21 26V48M27 26V48" /><S d="M0 48L48 0" strokeWidth="2" /></>,
  layers: <><path fill={O} d="M6 29L24 44L42 29V26L24 36L6 26z" transform="translate(0 2)" /><path fill={D} d="M6 22L24 38L42 22V20H6z" /><path fill={B} d="M24 2L42 17L24 31L6 17z" /></>,
  arrow: <path fill={D} d="M14 6L34 25L27 26L31 35L26 38L22 29L14 34z" />,
  highlight: <><S d="M3 0L20 21M46 4L28 21M28 28L48 44M20 28L4 48" strokeWidth="2" /><circle cx="24" cy="24" r="5.4" fill="#fff" stroke="#7c7c7c" strokeWidth="2" /></>,
  footprint: chipPads,
  route: <path fill="none" stroke={B} strokeWidth="3.6" d="M3 45L13 23H36L46 1" />,
  tune: <path fill="none" stroke={B} strokeWidth="3.6" d="M0 24H4C6 24 5 36 9 36C14 36 11 10 17 10C22 10 19 29 25 29C31 29 28 10 33 10C38 10 36 30 41 30C45 30 43 23 48 23" />,
  via: <circle cx="24" cy="24" r="9.5" fill="#fff" stroke={O} strokeWidth="8" />,
  zoneAdd: <><path fill={B} d="M16 4H44V17C34 14 28 18 28 22C28 27 34 31 44 28V44H4V24H16z" /><path stroke="#3d3d3d" strokeWidth="4" d="M34 22H44" /><circle cx="34" cy="22" r="4" fill="#3d3d3d" /></>,
  rule: <><clipPath id="rl"><path d="M17 5H43V44H5V26H17z" /></clipPath><g clipPath="url(#rl)"><path stroke={D} strokeWidth="3.4" d="M0 26L24 50M0 16L34 50M0 5L44 49M4 -2L50 44M14 -2L50 34M24 -2L50 24M34 -2L50 14" /></g><S d="M17 5H43V44H5V26H17z" strokeWidth="2.4" /></>,
  line: <S d="M5 44L43 5" />,
  arc: <S d="M5 44C5 18 20 5 43 5" />,
  rect: <path fill="#c2c2c2" stroke={D} strokeWidth="3" d="M5 7H43V40H5z" />,
  circle: <circle cx="24" cy="24" r="18.5" fill="#c2c2c2" stroke={D} strokeWidth="3" />,
  poly: <path fill="#c2c2c2" stroke={D} strokeWidth="3" d="M6 6L43 13L40 36L9 43L23 27z" />,
  text: <text x="24" y="43" textAnchor="middle" fontSize="52" fontWeight="700" fontFamily="Open Sans, sans-serif" fill={D}>T</text>,
  dim: <><S d="M6 30L30 6M0 29L13 42M27 0L42 14" strokeWidth="2.4" /><path fill={D} d="M5 31L8 22L14 28zM31 5L22 8L28 14z" /><circle cx="42" cy="14" r="5.4" fill={B} /><circle cx="13" cy="43" r="5.4" fill={B} /></>,
  target: <><circle cx="24" cy="24" r="20" fill={G} /><path fill={D} d="M24 4A20 20 0 0 1 44 24H24zM24 44A20 20 0 0 1 4 24H24z" /><path stroke="#333" strokeWidth="3" d="M24 0V48M0 24H48" /></>,
  del: <><path fill={D} d="M8 1L30 22L22 23L26 31L20 33L17 26L8 32z" /><circle cx="34" cy="33" r="14" fill={R} /><path stroke="#fff" strokeWidth="5" d="M28 27L40 39M40 27L28 39" /></>,
  origin: <><S d="M4 8V43H36" strokeWidth="2.2" /><path fill="#777" d="M4 2L7 12H1zM44 43L34 40V46z" /><circle cx="28" cy="20" r="11" fill={D} /><path fill={G} d="M17 20A11 11 0 0 1 28 9V20zM39 20A11 11 0 0 1 28 31V20z" /><path stroke="#333" strokeWidth="3" d="M28 5V35M13 20H43" /></>,
  ruler: <><path fill="#e4e4e4" stroke={D} strokeWidth="2.8" d="M3 36L36 3L46 12L12 46z" /><S d="M12 31L17 36M19 24L24 29M26 17L31 22M33 11L37 15" strokeWidth="2.4" /></>,
};
const Icon = ({ n }) => (
  <svg width="48" height="48" viewBox="0 0 48 48">{icons[n]}</svg>
);

const ToolRow = ({ items }) =>
  items.map((it, i) => {
    if (it === "|") return <Sep key={i} />;
    const on = it.endsWith("*");
    return (
      <Cell key={i}>
        <Btn $on={on}><Icon n={it.replace("*", "")} /></Btn>
      </Cell>
    );
  });
const ToolColumn = ({ items }) =>
  items.map((it, i) => {
    if (it === "|") return <Sep key={i} $h />;
    const name = it.replace(/[*>~]/, "");
    return (
      <SideCell key={i}>
        <Btn $on={it.endsWith("*")} $dim={it.endsWith("~")}><Icon n={name} /></Btn>
        {it.endsWith(">") && <Flyout />}
      </SideCell>
    );
  });
const Chevrons = () => (
  <svg width="16" height="26" viewBox="0 0 16 26" fill="none" stroke="#262626" strokeWidth="3" strokeLinecap="round" strokeLinejoin="round">
    <path d="M2 9L8 3L14 9M2 17L8 23L14 17" />
  </svg>
);
const Select = ({ children, ...p }) => (
  <Combo {...p}><ComboText>{children}</ComboText><Chevrons /></Combo>
);
const Eye = () => (
  <svg width="32" height="32" viewBox="0 0 32 32">
    <circle cx="16" cy="16" r="16" fill="#545454" />
    <path fill="#f5f5f5" d="M4 16C9 8 23 8 28 16C23 24 9 24 4 16z" />
    <circle cx="16" cy="16" r="4.6" fill="#f5f5f5" stroke="#8b8b8b" strokeWidth="2.4" />
  </svg>
);

const mainTools = "save | setup | page print plot | undo redo | find | refresh zoomIn zoomOut zoomFit zoomObj zoomSel | ccw cw group ungroup lock unlock | fpEdit fpLib | update drc |".split(" ");
const viewTools = "raytrace | copy | box3d | refresh zoomIn zoomOut zoomFit | rx1 rx2 | ry1 ry2 | rz1 rz2 | flip | left right up down | cube | tht* smd* virt*".split(" ");
const leftTools = "grid* polar inch mil* mm cursor* | rats* curved | nets1 nets2~ | zone* zoneOff | padOff viaOff trackOff | layers*".split(" ");
const rightTools = "arrow* highlight | footprint route> tune> via zoneAdd rule | line arc rect circle poly text dim> target del | origin> ruler".split(" ");

const layers = [
  ["F.Cu", "#37b497"], ["In1.Cu", "#80c97f"], ["In2.Cu", "#cd7c2b"], ["B.Cu", "#4d7fc4"], ["F.Adhesive", "#840084"],
  ["B.Adhesive", "#000084"], ["F.Paste", "#a2918e", "#b09a96"], ["B.Paste", "#02b2b4", "#00c2c2"], ["F.Silkscreen", "#f1eda0"], ["B.Silkscreen", "#e7b1a7"],
  ["F.Mask", "#56327c", "#7c38a6"], ["B.Mask", "#027172", "#00989a"], ["User.Drawings", "#c2c2c2"], ["User.Comment", "#5993dc"], ["User.Eco1", "#b4dad2"],
  ["User.Eco2", "#d8c852"], ["Edge.Cuts", "#d0d2cd"], ["Margin", "#ff26e2"], ["F.Courtyard", "#ff26e2"], ["B.Courtyard", "#26e9ff"],
  ["F.Fab", "#afafaf"], ["B.Fab", "#585d84"],
];
const filters = ["所有项目", "锁定项目", "封装", "文本", "布线", "过孔", "焊盘", "图形", "敷铜", "规则敷铜", "标注", "其他项目"];

/* ---------- board editor canvas ---------- */
const range = (n) => Array.from({ length: n }, (_, i) => i);
const PcbCanvas = () => {
  const blueX = (y) => 2181 + ((y - 244) / 1249) * 27;
  const tealX = (y) => 2240 + ((y - 244) / 1293) * 3;
  const botY = (x) => 1472 + ((x - 184) / 2024) * 21.5;
  return (
    <svg width="2336" height="1294" viewBox="68 244 2336 1294">
      <rect x="68" y="244" width="2340" height="1294" fill="#001023" />
      <path stroke="#8d8d8d" strokeWidth="1.4" d="M68 294.5H2404M992.5 1400V1538" />
      {range(18).map((r) => [2195, 2263.5, 2332, 2401].map((x) => <rect key={r + "-" + x} x={x} y={298 + 69 * r} width="1.5" height="1.5" fill="#5c6470" />))}
      {range(36).map((c) => <rect key={c} x={121 + 69 * c} y="1472" width="1.5" height="1.5" fill="#4c5460" />)}
      <g stroke="#3a78be" strokeWidth="1.5" fill="none">
        <path d="M2181 244L2208 1493L184 1472V1400" />
        <path d={range(90).map((i) => { const y = 256 + i * 13.8; return `M${blueX(y)} ${y}l-13 -11`; }).join("")} />
        <path d={range(101).map((i) => { const x = 206 + i * 19.9; return `M${x} ${botY(x)}l-12 -12`; }).join("")} />
      </g>
      <g stroke="#16a884" strokeWidth="1.5" fill="none">
        <path d="M2240 244L2243 1538M142 1400V1538" />
        <path d={range(94).map((i) => { const y = 244 + i * 13.8; return `M${tealX(y)} ${y}l-14 13`; }).join("")} />
        <path d={range(10).map((i) => `M142 ${1537 - i * 13.9}l14 -12`).join("")} />
      </g>
      <text x="70" y="1250" fontSize="43" fill="#b3b3b3" fontFamily="Inter, sans-serif" textLength="42">B_</text>
      <text x="2174" y="1050" fontSize="38" fontWeight="500" fill="#3f86d2" fontFamily="Inter, sans-serif" textLength="69">mm</text>
    </svg>
  );
};

/* ---------- rendered circuit board ---------- */
const W = "#e4e4e2";
const Res = ({ x, y, v }) => (
  <g transform={`translate(${x} ${y})${v ? " rotate(90)" : ""}`}>
    <rect x="-33" y="-11" width="66" height="22" rx="4" fill={W} /><rect x="-24" y="-13" width="48" height="26" fill="#9a9a9a" /><rect x="-17" y="-13" width="34" height="26" fill="#242424" />
  </g>
);
const Cap = ({ x, y, v }) => (
  <g transform={`translate(${x} ${y})${v ? " rotate(90)" : ""}`}>
    <rect x="-22" y="-7" width="44" height="14" rx="3" fill={W} /><rect x="-12" y="-9" width="24" height="18" fill="#c9c5c2" /><rect x="-8" y="-8" width="16" height="16" fill="#a9735a" />
  </g>
);
const Led = ({ x, y, v }) => (
  <g transform={`translate(${x} ${y})${v ? " rotate(90)" : ""}`}>
    <rect x="-33" y="-12" width="66" height="24" rx="4" fill={W} /><rect x="-22" y="-12" width="44" height="24" fill="#b8b08c" /><rect x="-12" y="-11" width="24" height="22" fill="#fffef2" />
  </g>
);
const Silk = ({ x, y, s = 26, w, children, rot, a }) => (
  <text x={x} y={y} fontSize={s} textLength={w} lengthAdjust="spacingAndGlyphs" textAnchor={a} transform={rot ? `rotate(${rot} ${x} ${y})` : undefined}>{children}</text>
);
const noBall = (r, c) =>
  (r === 6 && (c === 7 || c === 9)) || ((r === 7 || r === 8) && c > 6 - (r - 7) && c < 10 + (r - 7)) || (r === 9 && c > 5 && c < 11) || (r === 10 && (c === 7 || c === 9));

const PcbBoard = () => (
  <Board width="538" height="326" viewBox="28 27 1507 978" preserveAspectRatio="none">
    <defs><clipPath id="bd"><rect x="28" y="27" width="1507" height="978" rx="32" /></clipPath></defs>
    <g clipPath="url(#bd)">
      <rect x="28" y="27" width="1507" height="978" fill="#225437" />
      <g fill="#326640">
        <path d="M400 34H1270L1180 105H700L660 60H400zM1250 150L1400 150H1520V460L1490 440L1280 300zM1250 400L1430 600H1240zM1060 690H1330V760L1480 900V976H1060zM28 640H150L240 700V740H60L170 870L230 960V1000H28zM120 60H200V100H120zM960 310H1180L1190 350H860zM190 60h60v60h-60zM880 300h90l-60 40h-90zM700 190h120v20h-120zM930 900h90v90h-90z" />
        <path d="M270 170h220v24H270zM640 640h180l40 30h-220zM860 680h140v22H860z" opacity=".7" />
      </g>
      <g fill="none" stroke="#1a4730" strokeWidth="9">
        <path d="M100 50H380L420 90V200M640 200L700 130H1180L1240 60H1470L1500 90M630 400H800L900 300H1060M640 620L700 660H1000L1060 620H1240M1230 420L1540 670M1270 560L1370 650M1050 880L1400 880L1480 790M150 740V830L230 950H390M40 560H280" />
        <path d="M640 350C700 380 720 300 800 330L900 440H1000L1060 500H1230" />
      </g>
      <g fill="none" stroke="#35704a" strokeWidth="2.4" opacity=".65">
        {range(9).map((i) => (
          <path key={i} d={`M${630 + i * 3} ${360 + i * 9}H${700 + i * 8}L${790 + i * 8} ${270 + i * 8}H1180L1240 ${330 + i * 8}H1330L1530 ${150 + i * 9}M${640} ${600 + i * 7}L${690 + i * 2} ${640 + i * 5}H1010L1070 ${580 + i * 7}H1230M${660} ${190 - i * 9}L${700 + i * 4} ${150 - i * 6}H1200L${1240} ${100 - i * 6}H${1480 + i * 4}L1530 ${120 - i * 6}M${640 + i * 12} ${470 + i * 5}V520L${700 + i * 12} 590M${1230} ${430 + i * 8}H1260L1530 ${640 + i * 9}`} />
        ))}
        {range(7).map((i) => (
          <path key={"l" + i} d={`M${90 + i * 8} ${60 + i * 8}H${400 + i * 7}L${460 + i * 7} ${110 + i * 4}V200M620 ${230 + i * 20}H650L${680 + i * 10} ${200 + i * 20}M${630 + i * 9} 590V${630 + i * 4}M${800 + i * 14} 400L${860 + i * 14} 470V520M${150 + i * 9} 740V${800 + i * 8}L${240 + i * 5} ${930 + i * 6}H400M${1060} ${720 + i * 7}H${1340 - i * 4}L${1490 - i * 5} ${880 + i * 4}`} />
        ))}
      </g>
      <g fill="#0d1f14">
        {range(150).map((i) => <circle key={i} cx={640 + ((i * 137) % 560)} cy={120 + ((i * 211) % 560)} r="2.600" />)}
        {range(40).map((i) => <circle key={"b" + i} cx={60 + ((i * 311) % 1440)} cy={640 + ((i * 97) % 330)} r="2.600" />)}
      </g>

      {/* pin headers */}
      <path fill="#0a0a0a" d="M160 80H172V400H50V390H160zM415 918H1000V930H415z" />
      <path fill="#5d5451" d="M48 75H158L166 83V388L158 397H48L41 388V83zM407 930H1007V983L1000 990H413L407 983z" />
      {range(5).map((i) => [41, 104].map((x) => (
        <g key={x + "-" + i}><path fill="#46381b" d={`M${x} ${86 + 67.5 * i}l36 8v18h-14L${x} ${100 + 67.5 * i}z`} /><rect x={x - 7} y={83 + 67.5 * i} width="15" height="15" fill="#d8b36a" /><rect x={x - 4} y={86 + 67.5 * i} width="8" height="9" fill="#fff3c8" /></g>
      )))}
      {range(10).map((i) => (
        <g key={i}><path fill="#46381b" d={`M${415 + 62.7 * i} 968l8 -20h14v14l-7 16z`} /><rect x={414 + 62.7 * i} y="967" width="16" height="18" fill="#d8b36a" /><rect x={418 + 62.7 * i} y="971" width="8" height="10" fill="#fff3c8" /></g>
      ))}

      {/* chip outlines */}
      <g fill="none" stroke={W} strokeWidth="3">
        <path strokeWidth="4.5" d="M290 213H604L618 227V565H290z" />
        <path d="M170 80V400H50M672 259H662V523H672M1182 259H1191V523H1182M1239 148V598M1525 148V598M1063 677H1484M1063 984H1484M51 452H181V640H51zM51 515H39V580H51M108 492V628M521 595H387V685H521M1115 158H1173V196H1115M48 850V994H268V948M268 850V905M285 850V911H322V850M322 911H360V850M360 911H396V850M592 800V860H627V800M470 918H1007V928" />
        <path strokeWidth="2.4" d="M457 750V822M523 750V822M470 733H510M470 843H510M850 728V808M916 728V808M866 713H902M866 825H902M640 735V758M708 735V795M723 735V758M793 735V795" />
        <rect x="469" y="752" width="44" height="74" rx="22" strokeWidth="2.4" /><rect x="861" y="732" width="46" height="74" rx="22" strokeWidth="2.4" />
      </g>
      <g fill={W}>
        {range(17).map((r) => range(17).map((c) => !noBall(r, c) && <circle key={r + "-" + c} cx={304 + 18.75 * c} cy={229 + 20 * r} r="5" />))}
        {range(27).map((i) => <path key={i} d={`M${678 + 18.7 * i} 232h11v30h-11zM${678 + 18.7 * i} 519h11v30h-11z`} />)}
        {range(24).map((i) => <path key={i} d={`M${1244 + 11.65 * i} 111h7.4v33h-7.4zM${1244 + 11.65 * i} 604h7.4v32h-7.4zM1030 ${683 + 12.55 * i}h28v6.5h-28zM1489 ${683 + 12.55 * i}h28v6.5h-28z`} />)}
        {range(7).map((i) => <rect key={i} x={117 + 13.6 * i} y="762" width="8" height="50" />)}
        <path d="M75 762h13v50H75zM91 762h16v50H91zM210 762h13v50h-13zM227 762h13v50h-13zM392 610h46v60h-46zM477 610h46v60h-46z" />
        {[[465, 733], [515, 733], [465, 843], [515, 843], [858, 714], [908, 714], [858, 824], [908, 824]].map(([x, y]) => <rect key={x + "-" + y} x={x - 8} y={y - 13} width="16" height="26" rx="5" />)}
        <path d="M643 732h14v30h-14zM689 732h14v30h-14zM727 732h14v30h-14zM773 732h14v30h-14zM666 790h14v26h-14zM749 790h14v26h-14zM753 219h11v9h-11zM939 219h12v9h-12zM1126 219h12v9h-12zM845 554h12v9h-12zM1032 554h12v9h-12zM1288 98h12v9h-12zM1406 98h12v9h-12zM1300 641h12v9h-12zM1418 641h12v9h-12zM1016 793h9v11h-9zM1016 919h9v11h-9zM1522 781h10v11h-10zM1522 906h10v11h-10z" />
        <circle cx="617" cy="214" r="5" />
      </g>
      <path fill="#665c5c" stroke="#413a3a" strokeWidth="2" d="M638 760H708V794H638zM721 760H791V794H721z" />
      {[[57, 818, 24], [258, 818, 24], [57, 922, 18], [258, 922, 18]].map(([x, y, h]) => <rect key={x + "-" + y} x={x - 9} y={y - h} width="18" height={2 * h} rx="9" fill="#120c06" stroke="#f2ef7b" strokeWidth="4.5" />)}
      <circle cx="90" cy="831" r="8" fill="#2a1a12" /><circle cx="225" cy="831" r="8" fill="#2a1a12" />

      {[[228, 87], [308, 86], [413, 86], [530, 109], [225, 166], [1055, 176], [225, 469], [225, 508], [225, 547], [225, 586], [225, 625], [119, 712], [198, 712], [327, 935], [327, 974]].map(([x, y]) => <Res key={x + "-" + y} x={x} y={y} />)}
      {[[302, 782], [340, 782], [378, 781], [548, 675], [550, 760], [609, 730], [942, 742]].map(([x, y]) => <Res key={x + "-" + y} x={x} y={y} v />)}
      <Led x={1136} y={176} /><Led x={299} y={872} v /><Led x={339} y={872} v /><Led x={377} y={872} v /><Led x={608} y={820} v />
      {[[237, 199], [237, 225], [237, 250], [237, 286], [237, 311], [237, 337], [237, 372], [237, 398], [237, 424], [740, 202], [823, 201], [740, 575], [794, 575], [849, 575], [1173, 576], [1212, 637], [1394, 659], [1498, 659], [1355, 90], [410, 702], [504, 705], [673, 712], [755, 711], [659, 836], [711, 836]].map(([x, y]) => <Cap key={x + "-" + y} x={x} y={y} />)}
      {[[278, 158], [302, 157], [326, 157], [368, 158], [393, 158], [417, 158], [441, 158], [502, 159], [526, 158], [550, 158], [580, 158], [605, 158], [629, 158], [278, 619], [312, 619], [337, 619], [362, 619], [363, 687], [578, 660], [603, 660], [545, 832], [936, 812], [1004, 811]].map(([x, y]) => <Cap key={x + "-" + y} x={x} y={y} v />)}

      <g fill="#ffffff" fontFamily='"Noto Sans", sans-serif' fontWeight="500">
        <Silk x={211} y={57} s={26} w={31}>R3</Silk><Silk x={288} y={55} s={26} w={46}>R17</Silk><Silk x={387} y={56} s={26} w={45}>R16</Silk><Silk x={507} y={85} s={26} w={45}>R15</Silk><Silk x={198} y={143} s={26} w={45}>R14</Silk>
        <Silk x={692} y={95} s={45} w={221}>us3c v1.0</Silk><Silk x={692} y={148} s={45} w={383}>jlywxy 2023.1.28</Silk>
        <Silk x={687} y={403} s={41} w={301}>HY57V561620FTP</Silk><Silk x={1163} y={844} s={41} w={222}>K9F5608U0C</Silk>
        <Silk x={1394} y={545} s={41} w={342} rot={-90}>M29W640FB70N6E</Silk>
        <Silk x={1190} y={141} s={27} w={112} rot={90}>NOR  ACT</Silk>
        <Silk x={1490} y={200} s={40}>*</Silk><Silk x={673} y={528} s={40}>*</Silk><Silk x={1071} y={721} s={40}>*</Silk>
        <Silk x={161} y={424} s={26} w={46}>R20</Silk><Silk x={161} y={447} s={26} w={46}>R12</Silk><Silk x={318} y={586} s={26} w={58}>C2C1</Silk><Silk x={534} y={628} s={26} w={30}>R1</Silk>
        <Silk x={173} y={662} s={26} w={46}>R18</Silk><Silk x={218} y={681} s={26} w={46}>R13</Silk><Silk x={222} y={690} s={26} w={46}>R10</Silk><Silk x={175} y={697} s={26} w={46}>R19</Silk><Silk x={58} y={689} s={26} w={46}>R11</Silk>
        <Silk x={369} y={946} s={34} w={38}>R9</Silk><Silk x={369} y={986} s={34} w={38}>R8</Silk>
        <Silk x={83} y={484} s={27} w={54}>JTAG</Silk>
        {[["TCK", "GND"], ["TDO", "VREF"], ["TMS", "NC"], ["NC", "TRST"], ["TDI", "GND"]].map(([l, r], i) => (
          <React.Fragment key={i}><Silk x={103} y={512 + 28.5 * i} s={27} a="end" w={l.length * 15.5}>{l}</Silk><Silk x={118} y={512 + 28.5 * i} s={27} w={r.length * 14.5 + 3}>{r}</Silk></React.Fragment>
        ))}
        <Silk x={297} y={740} s={31} w={86} rot={-90}>GPG2</Silk><Silk x={324} y={740} s={31} w={86} rot={-90}>GPG1</Silk><Silk x={350} y={740} s={31} w={86} rot={-90}>GPG0</Silk>
        <Silk x={438} y={840} s={34} w={98} rot={-90}>RESET</Silk><Silk x={590} y={852} s={34} w={112} rot={-90}>POWER</Silk><Silk x={840} y={810} s={34} w={86} rot={-90}>GPG9</Silk>
        <Silk x={640} y={696} s={34} w={54}>3v3</Silk><Silk x={724} y={694} s={34} w={54}>1v8</Silk><Silk x={438} y={640} s={30}>Y1</Silk>
        {[["GND", 428, 922, 62], ["G12", 490, 922, 60], ["G13", 556, 920, 60], ["G14", 610, 918, 60], ["SPI0MOSI", 658, 918, 152], ["SPI0MISO", 722, 918, 144], ["SPI0CLK", 778, 920, 126], ["1v8", 850, 914, 54], ["3v3", 900, 910, 54], ["VBUS", 946, 914, 82]].map(([t, x, y, w]) => (
          <Silk key={t} x={x} y={y} s={32} w={w} rot={-33}>{t}</Silk>
        ))}
      </g>
      <circle cx="458" cy="640" r="11" fill="#ff00ff" />
    </g>
  </Board>
);

/* ---------- dock icons, 71 unit grid ---------- */
const Tile = ({ f }) => <rect width="71" height="71" rx="16" fill={f} />;
const dockIcons = [
  ["finder", true, <>
    <Tile f="#e3e8f0" /><path fill="#1c8ff5" d="M16 0H38C32 20 31 30 31 42H41C41 54 42 64 45 71H16A16 16 0 0 1 0 55V16A16 16 0 0 1 16 0z" />
    <path fill="none" stroke="#16222f" strokeWidth="3" strokeLinecap="round" d="M19 21V26M53 21V26M15 48C26 59 46 59 57 48" />
  </>],
  ["safari", false, <>
    <Tile f="#f4f4f5" /><circle cx="35.5" cy="35.5" r="31" fill="#1f8df2" /><circle cx="35.5" cy="35.5" r="28" fill="none" stroke="#cfe8ff" strokeWidth="3" strokeDasharray="1 2" />
    <path fill="#f7453a" d="M58 13L39 39L32 32z" /><path fill="#fff" d="M13 58L32 32L39 39z" />
  </>],
  ["code", true, <><Tile f="#fff" /><path fill="#2489ca" d="M47 10L61 17V54L47 61L44 59V12z" /><path fill="none" stroke="#0a6cb5" strokeWidth="8" strokeLinejoin="round" d="M48 15L13 44M13 27L48 56" /><path fill="#1f9cf0" d="M46 11L61 17V54L46 60z" /></>],
  ["term", true, <><rect x="0" y="0" width="71" height="71" rx="16" fill="#b9ccd4" /><rect x="3" y="3" width="65" height="65" rx="13" fill="#000" /><rect x="7" y="7" width="57" height="57" rx="9" fill="#262626" /><path fill="none" stroke="#fff" strokeWidth="3" d="M13 13L20 18L13 23M24 26H35" /></>],
  ["chrome", false, <>
    <Tile f="#fff" /><circle cx="35.5" cy="35.5" r="31" fill="#f9b91a" /><path fill="#e5412f" d="M35.5 35.5L8.6 20A31 31 0 0 1 62.4 20z" /><path fill="#2d9f4b" d="M35.5 35.5L8.6 20A31 31 0 0 0 35.5 66.5L49 43z" />
    <path fill="#e5412f" d="M35.5 20H62.4L50 10z" /><circle cx="35.5" cy="35.5" r="14.5" fill="#fff" /><circle cx="35.5" cy="35.5" r="11.5" fill="#3b7ded" />
  </>],
  ["notes", false, <><Tile f="#f5f3ef" /><path fill="#fcc917" d="M16 0H55A16 16 0 0 1 71 16V18H0V16A16 16 0 0 1 16 0z" /><path stroke="#c9c4bb" strokeWidth="1.6" d="M0 35H71M0 53H71" /><path stroke="#c9b98a" strokeWidth="1.6" strokeDasharray="2 2" d="M0 20.5H71" /></>],
  ["messages", false, <><Tile f="#35d24c" /><path fill="#f2fbf2" d="M36 12C50 12 61 21 61 33C61 46 50 54 36 54C33 54 30 54 27 53C24 57 20 59 17 59C20 56 21 53 20 50C14 46 10 40 10 33C10 21 22 12 36 12z" /></>],
  ["music", false, <><Tile f="#fb3b55" /><path fill="#fff" d="M27 18L53 12V47A8 7 0 1 1 48 41V24L32 28V53A8 7 0 1 1 27 47z" /></>],
  ["arduino", false, <><Tile f="#1a9a9e" /><g fill="none" stroke="#f2f5f5" strokeWidth="5"><path d="M35.5 35C30 26 26 25 22 25C15 25 11 30 11 35.500S15 46 22 46C26 46 30 45 35.500 35C41 26 45 25 49 25C56 25 60 30 60 35.500S56 46 49 46C45 46 41 45 35.500 35z" /></g><path stroke="#f2f5f5" strokeWidth="2.6" d="M18 35.500H26M45 35.500H53M49 31.500V39.500" /></>],
  ["ps", false, <><rect x="-5" y="-8" width="81" height="81" rx="16" fill="#2bd0fc" /><rect x="-2" y="-5" width="75" height="75" rx="13" fill="#04202e" /><text x="35" y="48" textAnchor="middle" fontSize="44" fontWeight="600" fontFamily='"Open Sans", sans-serif' fill="#e9f6ff" textLength="46" lengthAdjust="spacingAndGlyphs">Ps</text></>],
  ["cloud", true, <>
    <rect x="-8" y="-9" width="88" height="88" rx="9" fill="#6b97f9" /><path fill="none" stroke="#fff" strokeWidth="6" strokeLinecap="round" d="M12 50C-2 42 -1 26 12 24C16 8 36 4 46 14C50 20 52 22 52 24C66 22 74 32 68 44" />
    <path stroke="#fff" strokeWidth="8" d="M26 46L46 30" /><circle cx="22" cy="50" r="9" fill="none" stroke="#fff" strokeWidth="7" /><text x="39" y="63" fontSize="19" fontWeight="600" fontFamily='"Open Sans", sans-serif' fill="#fff" textLength="36">PRO</text>
  </>],
  ["preview", true, <>
    <rect x="0" y="0" width="71" height="71" rx="14" fill="#f3f3f3" /><path fill="#9cc3ee" d="M14 5H57A9 9 0 0 1 66 14V40H5V14A9 9 0 0 1 14 5z" /><path fill="#1d4a80" d="M5 38H66V52H5z" /><path fill="#9c9488" d="M5 50H66V57A9 9 0 0 1 57 66H14A9 9 0 0 1 5 57z" />
    <path fill="#e8eef2" d="M6 56l6-6 6 5 6-6 6 9-9 6-12-1z" /><path fill="#1b1b1b" d="M36 38Q37 34 52 34Q67 34 68 38V49H36z" /><path fill="#d5d8da" stroke="#6c6c6c" strokeWidth="1.6" d="M38 49H65L72 70Q70 74 52 74Q34 74 32 70z" /><path fill="#7d8c99" d="M43 54H61V65H43z" /><path fill="#eef1f3" d="M45 62l5-6 4 5 3-3 3 6H45z" />
  </>],
  ["ki", true, <><rect x="2" y="2" width="68" height="68" rx="14" fill="#2a3bbd" /><text x="9" y="57" fontSize="50" fontWeight="800" fontFamily='"Open Sans", sans-serif' fill="#fff" textLength="50" lengthAdjust="spacingAndGlyphs">Ki</text><circle cx="54" cy="18" r="6.6" fill="#ff7a1a" /></>],
];

const docRows = [
  ["", "", "", "", "", "", ""],
  ["M11", "", "", "", "", "I", "t12"],
  ["R12", "CLKOUT0/GPH9", "GPH9", "–/–", "O(L)/–", "I", "t12"],
];

/* holds both stacked windows, and carries the editor's own drop shadow */
const WindowStack = styled.main`
  position: absolute;
  left: 0;
  top: 0;
  width: 2880px;
  height: 1678px;
  &::before {
    content: "";
    position: absolute;
    left: 0;
    top: 50px;
    width: 2880px;
    height: 1628px;
    border-radius: 20px;
    box-shadow: 0 0 2px rgba(0, 0, 0, 0.7), 0 24px 60px rgba(0, 0, 0, 0.5);
  }
`;

export default function App() {
  return (
    <Desktop>
      <Global />
      <MenuBar>
        <svg width="67" height="34" viewBox="0 0 67 34" fill="#f3f3ef">
          <path d="M19.500 8C16 8 14 10 12.600 10C11 10 9 8.200 6.400 8.300C2 8.500 0 12.600 0 17C0 23.500 4.400 31 7.900 31C9.800 31 10.700 29.700 13.200 29.700C15.700 29.700 16.400 31 18.500 31C21.800 31 24.600 26.500 25.600 23.600C22.500 22.200 21 19.700 21 16.900C21 14.400 22.300 12.200 24.700 10.700C23.300 8.900 21.400 8 19.500 8zM13 7.500C12.800 4 15.800 .6 19 0.300C19.300 4 16.400 7.400 13 7.500z" />
        </svg>
        <MenuItem $w={117} $bold>KiCad</MenuItem>
        <MenuItem $w={94} $ls={0.1}>文件</MenuItem>
        <MenuItem $w={94} $ls={0.1}>编辑</MenuItem>
        <MenuItem $w={95} $ls={0.1}>视图</MenuItem>
        <MenuItem $w={152} $ls={0.4}>偏好设置</MenuItem>
        <MenuItem $w={144}>帮助 (H)</MenuItem>
        <MenuItem $w={100} $ls={-0.6}>Window</MenuItem>
        <Spacer />
        <StatusItem $w={74}>
          <svg width="36" height="30" viewBox="0 0 36 30" fill="none" stroke="#f3f3ef" strokeWidth="2.6"><rect x="9" y="9" width="25" height="19" rx="4" /><path d="M5 20A4 4 0 0 1 2 16V6A4 4 0 0 1 6 2H24A4 4 0 0 1 28 6" /></svg>
        </StatusItem>
        <StatusItem $w={72}>
          <svg width="40" height="28" viewBox="0 0 40 28" fill="none" stroke="#f3f3ef" strokeWidth="2.4"><path fill="#f3f3ef" d="M1 9H7L16 3V25L7 19H1z" /><path d="M22 9Q25 14 22 19" /><g opacity=".55"><path d="M27 5Q33 14 27 23" /><path d="M32 2Q41 14 32 26" /></g></svg>
        </StatusItem>
        <StatusItem $w={71}>
          <svg width="33" height="32" viewBox="0 0 33 32" fill="none" stroke="#f3f3ef" strokeWidth="4.6"><path d="M2 1L16 29L31 1M9 1L16 14L24 1" /><path d="M9 14L16 4L24 14" strokeWidth="3" /></svg>
        </StatusItem>
        <StatusItem $w={54}><Ime>A</Ime></StatusItem>
        <StatusItem $w={82} $ls={-0.4}>ABC</StatusItem>
        <StatusItem $w={67} $size={21.5} $ls={-0.6}>100%</StatusItem>
        <StatusItem $w={89}>
          <svg width="52" height="26" viewBox="0 0 52 26"><rect x="1.200" y="1.200" width="43.500" height="22.500" rx="7" fill="none" stroke="#f3f3ef" strokeOpacity=".6" strokeWidth="2" /><rect x="4" y="4" width="38" height="17" rx="4.500" fill="#f3f3ef" /><path fill="#f3f3ef" stroke="#4f5b34" strokeWidth="2" d="M27 0L13 14H22L19 25L33 11H24z" /><path fill="#f3f3ef" fillOpacity=".6" d="M47 8Q51 12 47 17z" /></svg>
        </StatusItem>
        <StatusItem $w={73}>
          <svg width="34" height="26" viewBox="0 0 34 26" fill="none" stroke="#f3f3ef" strokeWidth="4"><path opacity=".4" d="M2 9Q17 -4 32 9" /><path d="M8 15Q17 7 26 15" /><path fill="#f3f3ef" stroke="none" d="M17 25L11.500 19Q17 14.500 22.500 19z" /></svg>
        </StatusItem>
        <StatusItem $w={64}>
          <svg width="30" height="28" viewBox="0 0 30 28" fill="none" stroke="#f3f3ef" strokeWidth="2.400"><rect x="1.500" y="1.500" width="27" height="10.500" rx="5.200" /><circle cx="7.500" cy="6.700" r="3" /><rect x="1" y="16" width="28" height="11.500" rx="5.700" fill="#f3f3ef" stroke="none" /><circle cx="22.500" cy="21.700" r="3.400" fill="#4a572c" stroke="none" /></svg>
        </StatusItem>
        <StatusItem $w={179} $size={26} $ls={0.9}>1月28日 周六</StatusItem>
        <StatusItem $w={107} $size={26} $ls={1.4}>17:17</StatusItem>
      </MenuBar>
      <Wallpaper />

      <DocWindow>
        <Strip $w={22} $c="#e6e6e6" $line />
        <Strip $w={24} $c="#ededed" $line />
        <Thumbs>
          <ThumbCard>
            <ThumbPic />
            <ThumbText>PDP0 <b>DP1</b> N11<br />DN1/PDN0 D...</ThumbText>
          </ThumbCard>
        </Thumbs>
        <Strip $w={60} $c="#ececec" $line />
        <Page>
          <Table>
            {docRows.map((r, i) => r.map((t, j) => <Td key={i + "-" + j} $left={j === 1}>{t}</Td>))}
          </Table>
        </Page>
        <Strip $w={58} $c="#f7f7f7" $line />
        <GreyBlock />
        <Strip $w={17} $c="#c4c4c4" />
        <Strip $w={59} $c="#f0f0f0" />
      </DocWindow>

      <WindowStack>
        <WindowFrame $x={0} $y={50} $w={2880} $h={1628} $shadow="none">
          <TitleBar>
            <Lights $x={14}><Light $c="#d9d9d9" /><Light $c="#d9d9d9" /><Light $c="#d9d9d9" /></Lights>
            *us3c — PCB 编辑器
          </TitleBar>
          <Bar $pad={6}>
            <ToolRow items={mainTools} />
            <LayerBox><LayerChip />F.Cu (PgUp)</LayerBox>
            <DropBtn><svg width="16" height="12" viewBox="0 0 16 12" fill="none" stroke="#222" strokeWidth="3" strokeLinecap="round"><path d="M2 2L8 9L14 2" /></svg></DropBtn>
            <ToolRow items={["pair", "|", "net", "|", "console"]} />
          </Bar>
          <OptionsBar>
            <Select $w={328}>布线：使用网络类宽度</Select>
            <TrackBtn><svg width="48" height="52" viewBox="0 0 48 52"><S d="M3 2V32Q3 40 11 40H36Q44 40 44 32V2" strokeWidth="4" /><S d="M14 16H33M14 24H33" /><circle cx="24" cy="40" r="6" fill={B} /></svg></TrackBtn>
            <Divider $l={12} $r={9} />
            <Select $w={328}>过孔：使用网络类尺寸</Select>
            <Divider $l={12} $r={10} />
            <Select $w={490} $pl={16} $ls={-0.15}>网格：1.00 mils (0.0254 mm)</Select>
            <Divider $l={12} $r={9} />
            <Select $w={208} $pl={17}>自动缩放</Select>
          </OptionsBar>
          <Body>
            <SideBar $pad={0}><ToolColumn items={leftTools} /></SideBar>
            <Work>
              <PcbCanvas />
              <ScrollTrack><Thumb $w={16} $h={36} $m="651px 0 0 3px" /></ScrollTrack>
              <HTrack><Thumb $w={48} $h={16} $m="0 0 0 1204px" /></HTrack>
              <Corner />
            </Work>
            <RightBar>
              <SideBar $pad={4}><ToolColumn items={rightTools} /></SideBar>
              <PanelGrip><Dot /></PanelGrip>
            </RightBar>
            <Panel>
              <PanelTitle>外观</PanelTitle>
              <TabsRow>
                <Tabs><Tab $w={68} $on>层</Tab><Tab $w={91}>对象</Tab><TabLine /><Tab $w={91}>网络</Tab></Tabs>
              </TabsRow>
              <GroupBox>
                <ListView>
                  <Rows>
                    {layers.map(([n, c, e], i) => (
                      <LayerRow key={n} $on={i === 0}><Mark $on={i === 0} /><Chip $c={c} $edge={e} /><Eye /><LayerName>{n}</LayerName></LayerRow>
                    ))}
                  </Rows>
                  <ListScroll><ListThumb /></ListScroll>
                </ListView>
                <Collapse><Tri />图层显示选项</Collapse>
              </GroupBox>
              <PresetLabel>预设 (Ctrl+Tab)：</PresetLabel>
              <PresetWrap><Select $w={330} $pl={16}>所有铜层</Select></PresetWrap>
              <Splitter><Dot /></Splitter>
              <PanelTitle>选择筛选器</PanelTitle>
              <Filters>
                {filters.map((f, i) => (
                  <Filter key={f}>
                    <Check>{i !== 1 && <svg width="20" height="20" viewBox="0 0 20 20" fill="none" stroke="#1f1f1f" strokeWidth="3.600" strokeLinecap="round" strokeLinejoin="round"><path d="M3 11L8 17L17 3" /></svg>}</Check>
                    {f}
                  </Filter>
                ))}
              </Filters>
            </Panel>
          </Body>
          <InfoBar>
            {[["焊盘", "630", 102], ["过孔", "328", 102], ["布线分段数", "2621", 172], ["网络", "247", 100], ["未布线", "0", 100]].map(([a, b, w]) => (
              <InfoItem key={a} $w={w}>{a}<br />{b}</InfoItem>
            ))}
          </InfoBar>
          <StatusBar>
            <StatusCell $w={857} $ls={-0.02}>文件 '/Users/jlywxy/project/hardware/us3c/us3c/_autosave-us3c.kicad_pcb' 已保</StatusCell>
            <StatusCell $w={142}>Z 3.80</StatusCell>
            <StatusCell $w={313}>X 1576.00  Y 212.00</StatusCell>
            <StatusCell $w={502}>dx 1576.00  dy 212.00  dist 1590.19</StatusCell>
            <StatusCell $w={360}>grid X 1.00  Y 1.00</StatusCell>
            <StatusCell $w={84}>mils</StatusCell>
            <StatusCell $w={200}>选择项目</StatusCell>
          </StatusBar>
        </WindowFrame>
        <WindowFrame $x={110} $y={228} $w={2058} $h={1232} $shadow="0 0 2px rgba(0,0,0,.6), 0 30px 70px rgba(0,0,0,.45)">
          <TitleBar $active>
            <Lights $x={16}><Light $c="#ff5f57" /><Light $c="#febc2e" /><Light $c="#28c840" /></Lights>
            3D 查看器
          </TitleBar>
          <Bar $pad={8}><ToolRow items={viewTools} /></Bar>
          <View3D>
            <PcbBoard />
            <Axes width="100" height="100" viewBox="160 1275 100 100">
              <path fill="#00e408" d="M175 1300H189V1326H175z" /><path fill="#00ff0c" stroke="#0a7a10" strokeWidth="1" d="M182 1282L195 1307Q182 1312 169 1307z" />
              <path fill="#f40000" d="M195 1333.500H214V1346.500H195z" /><path fill="#ff0000" stroke="#8c0000" strokeWidth="1" d="M239 1340L214 1353Q210 1340 214 1327z" />
              <circle cx="182" cy="1340" r="16.500" fill="#0a02a4" />
            </Axes>
            <Pointer width="30" height="42" viewBox="0 0 30 42"><path fill="#000" stroke="#fff" strokeWidth="2" d="M4 2V30L10.500 24.500L15 35.500L20 33.500L15.500 22.500H24z" /></Pointer>
          </View3D>
          <ViewStatus>
            <StatusCell $w={1538} $ls={0.2}>上次渲染时间 14 s</StatusCell>
            <StatusCell $w={260}>dx 0.00</StatusCell>
            <StatusCell $w={200}>dy 0.00</StatusCell>
          </ViewStatus>
        </WindowFrame>
      </WindowStack>

      <Dock>
        {dockIcons.map(([n, run, art]) => (
          <DockApp key={n}>
            <svg width="71" height="71" viewBox="0 0 71 71">{art}</svg>
            {run && <Running />}
          </DockApp>
        ))}
        <DockLine />
        <DockApp $top={2}>
          <svg width="66" height="84" viewBox="0 0 66 84">
            <path fill="#b9bcc0" d="M8 12L18 4L26 10L34 2L44 8L54 6L60 16V20H6z" /><path fill="#6d5c50" d="M18 12l8 2-3 7-8-3zM36 12l9 3-5 6z" /><path fill="#4a82c0" d="M28 12l6 3-4 5z" />
            <path fill="#dcdcdb" stroke="#f7f7f7" strokeWidth="2" d="M3 18Q33 28 63 18L55 78Q33 86 11 78z" /><path fill="#efefef" d="M22 26L34 78H26L15 26zM44 26L38 76H46L54 24z" opacity=".7" />
          </svg>
        </DockApp>
      </Dock>
    </Desktop>
  );
}
